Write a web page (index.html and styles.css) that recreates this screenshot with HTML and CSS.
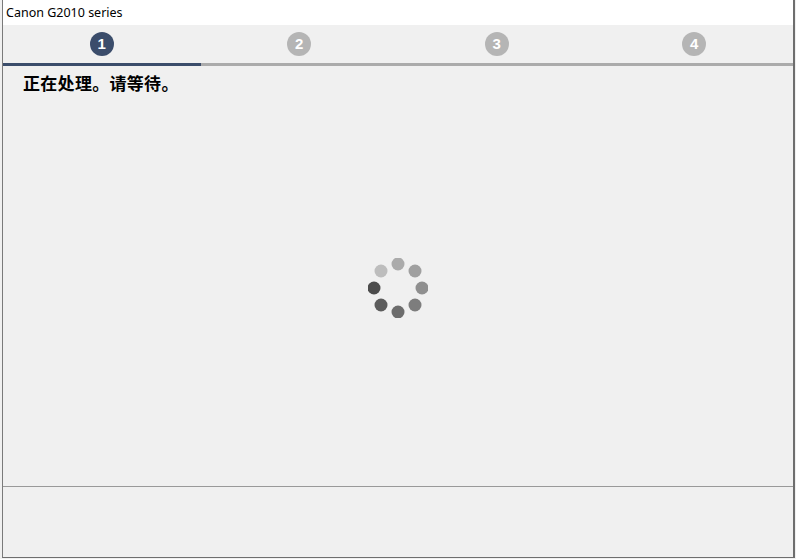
FILE: index.html
```html
<!DOCTYPE html>
<html lang="zh-CN">
<head>
<meta charset="utf-8">
<title>Canon G2010 series</title>
<link rel="stylesheet" href="styles.css">
</head>
<body>
<div class="frame">
  <div class="titlebar">Canon G2010 series</div>
  <div class="steps">
    <div class="step active"><span class="num">1</span></div>
    <div class="step"><span class="num">2</span></div>
    <div class="step"><span class="num">3</span></div>
    <div class="step"><span class="num">4</span></div>
  </div>
  <div class="content">
    <p class="message">正在处理。请等待。</p>
    <div class="spinner">
      <svg width="60" height="60" viewBox="0 0 60 60">
        <circle cx="30" cy="6" r="6.5" fill="#ababab"/>
        <circle cx="47" cy="13" r="6.5" fill="#a0a0a0"/>
        <circle cx="54" cy="30" r="6.5" fill="#8f8f8f"/>
        <circle cx="47" cy="47" r="6.5" fill="#7d7d7d"/>
        <circle cx="30" cy="54" r="6.5" fill="#6c6c6c"/>
        <circle cx="13" cy="47" r="6.5" fill="#5c5c5c"/>
        <circle cx="6" cy="30" r="6.5" fill="#4c4c4c"/>
        <circle cx="13" cy="13" r="6.5" fill="#bdbdbd"/>
      </svg>
    </div>
  </div>
  <div class="footer"></div>
</div>
</body>
</html>
```
FILE: styles.css
```css
* { box-sizing: border-box; }
html, body {
  margin: 0;
  padding: 0;
  background: #f0f0f0;
  width: 796px;
  height: 559px;
  overflow: hidden;
}
.frame {
  margin-left: 2px;
  width: 793px;
  height: 558px;
  border-left: 1px solid #7a7a7a;
  border-right: 2px solid #6e6e6e;
  border-bottom: 1px solid #6e6e6e;
  background: #f0f0f0;
  display: flex;
  flex-direction: column;
}
.titlebar {
  height: 25px;
  background: #ffffff;
  font-family: "Noto Sans", "Open Sans", sans-serif;
  font-size: 12.5px;
  color: #000;
  padding: 5px 0 0 3px;
  line-height: 16px;
}
.steps {
  height: 41px;
  display: flex;
}
.step {
  flex: 1;
  display: flex;
  justify-content: center;
  padding-top: 7px;
  border-bottom: 3px solid #ababab;
}
.step.active {
  border-bottom-color: #3b4d6b;
}
.num {
  width: 24px;
  height: 24px;
  border-radius: 50%;
  background: #b5b5b5;
  color: #ffffff;
  font-family: "Liberation Sans", Arial, sans-serif;
  font-weight: bold;
  font-size: 15px;
  line-height: 24px;
  text-align: center;
}
.step.active .num {
  background: #3b4d6b;
}
.content {
  flex: 1;
  display: flex;
  flex-direction: column;
  border-bottom: 1px solid #999999;
}
.message {
  margin: 7px 0 0 20px;
  font-family: "Noto Sans CJK SC", sans-serif;
  font-weight: bold;
  font-size: 17px;
  letter-spacing: 0.3px;
  line-height: 20px;
  color: #000;
}
.spinner {
  display: flex;
  justify-content: center;
  margin-top: 165px;
}
.spinner svg { display: block; }
.footer {
  height: 70px;
}
```
